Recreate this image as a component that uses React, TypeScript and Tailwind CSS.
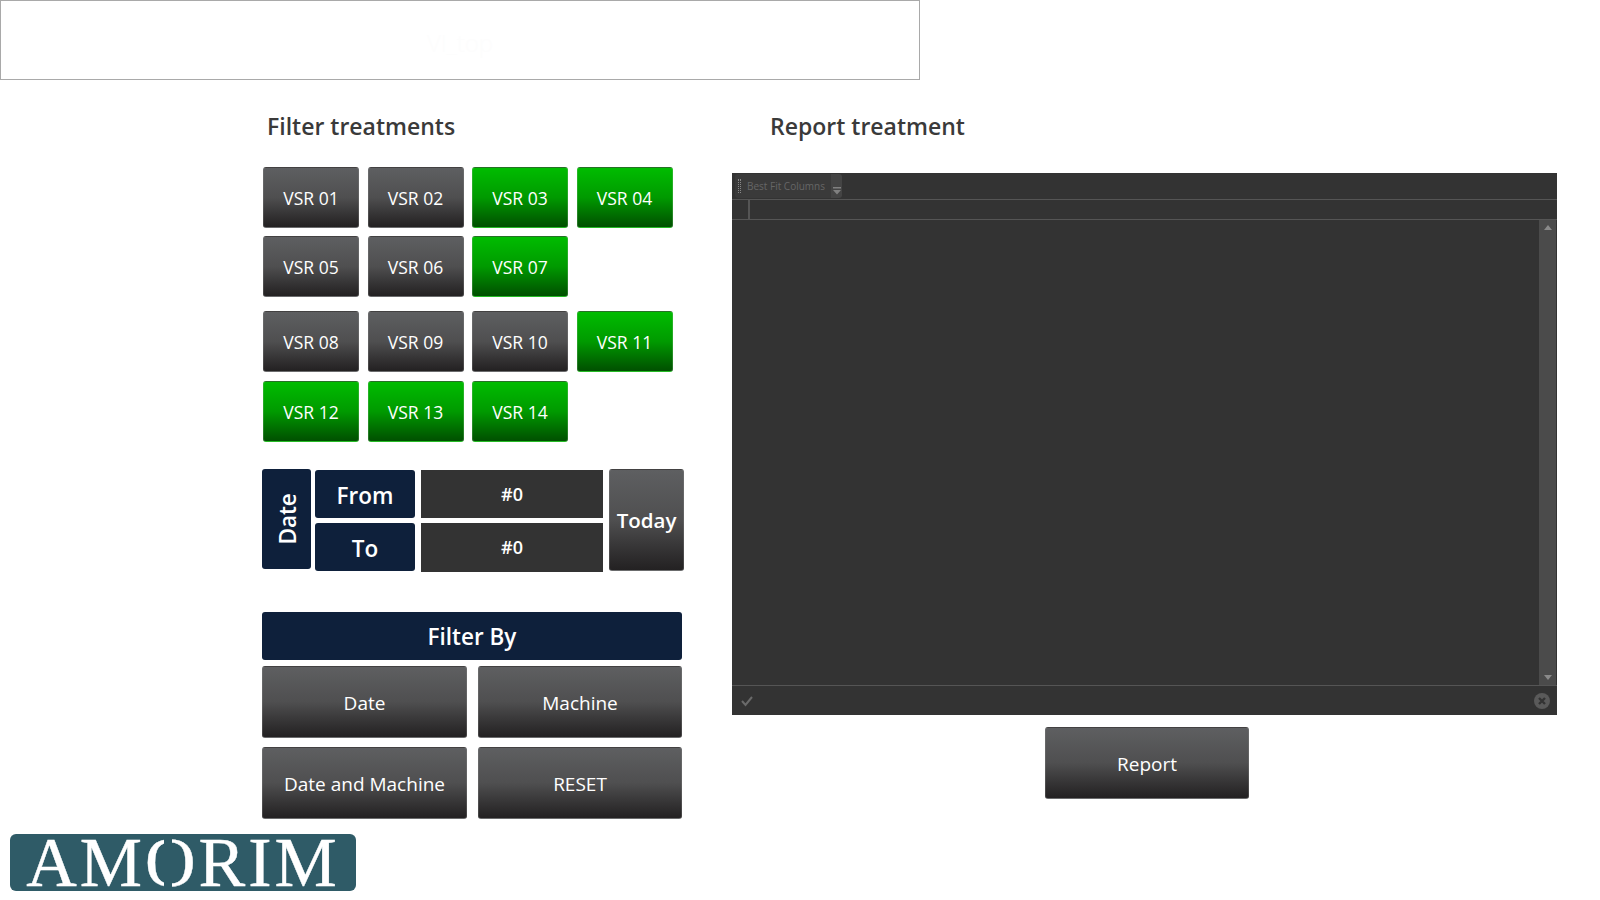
const FONT = "font-['Open_Sans','Noto_Sans',sans-serif]";

const GRAY = "border border-[#8a8a8a]/30 bg-gradient-to-b from-[#5e5f61] via-[#4f4f50] to-[#232122]";
const GREEN = "border border-[#7fb87f]/30 bg-gradient-to-b from-[#00bc00] via-[#009a00] to-[#005000]";

const ROW_A = [
  { label: "VSR 01", on: false },
  { label: "VSR 02", on: false },
  { label: "VSR 03", on: true },
  { label: "VSR 04", on: true },
];
const ROW_B = [
  { label: "VSR 05", on: false },
  { label: "VSR 06", on: false },
  { label: "VSR 07", on: true },
];
const ROW_C = [
  { label: "VSR 08", on: false },
  { label: "VSR 09", on: false },
  { label: "VSR 10", on: false },
  { label: "VSR 11", on: true },
];
const ROW_D = [
  { label: "VSR 12", on: true },
  { label: "VSR 13", on: true },
  { label: "VSR 14", on: true },
];

function VsrRow({ items }: { items: { label: string; on: boolean }[] }) {
  return (
    <div className="flex gap-[8.5px]">
      {items.map((item) => (
        <button
          key={item.label}
          className={`flex h-[61px] w-[96px] items-center justify-center rounded-[3px] pt-[2px] text-[17.5px] text-white ${item.on ? GREEN : GRAY}`}
        >
          {item.label}
        </button>
      ))}
    </div>
  );
}

function BigButton({ label, className = "w-[204px]" }: { label: string; className?: string }) {
  return (
    <button className={`flex h-[72px] items-center justify-center rounded-[3px] pt-[2px] text-[19px] text-white ${GRAY} ${className}`}>
      {label}
    </button>
  );
}

function Logo() {
  return (
    <div className="flex h-[57px] w-[346px] items-center justify-center rounded-[6px] bg-[#2f5b67]">
      <span className="font-['Liberation_Serif',serif] text-[70px] leading-[57px] tracking-[3px] text-white [-webkit-text-stroke:0.4px_white]">
        AM
        <span className="relative inline-block">
          O
          {/* O in the logo is broken at top and bottom */}
          <span className="absolute left-[19px] top-[5px] h-[6px] w-[8px] bg-[#2f5b67]" />
          <span className="absolute bottom-[3px] left-[19px] h-[6px] w-[8px] bg-[#2f5b67]" />
        </span>
        RIM
      </span>
    </div>
  );
}

export default function App() {
  return (
    <div className={`flex h-[900px] w-[1600px] flex-col overflow-hidden bg-white ${FONT}`}>
      <div className="flex h-[80px] w-[920px] shrink-0 items-center justify-center border border-[#a9a9a9] pt-[6px] text-[24px] font-light text-[#fdfdfd]">
        VI_top
      </div>

      <div className="flex h-[754px] shrink-0">
        {/* Left column */}
        <div className="ml-[262px] w-[470px] shrink-0">
          <h2 className="ml-[5px] mt-[30px] h-[57px] text-[23px] leading-[32px] font-semibold text-[#3a3a3a]">
            Filter treatments
          </h2>
          <div className="ml-[1px] flex flex-col gap-[8px]">
            <VsrRow items={ROW_A} />
            <VsrRow items={ROW_B} />
          </div>
          <div className="ml-[1px] mt-[14px] flex flex-col gap-[9px]">
            <VsrRow items={ROW_C} />
            <VsrRow items={ROW_D} />
          </div>

          <div className="mt-[27px] flex">
            <div className="flex h-[100px] w-[49px] items-center justify-center rounded-[3px] bg-[#0e203b] pl-[3px]">
              <span className="-rotate-90 text-[22.5px] font-semibold text-white">Date</span>
            </div>
            <div className="ml-[4px] mt-[1px] flex w-[100px] flex-col gap-[5px]">
              <div className="flex h-[48px] items-center justify-center rounded-[3px] bg-[#0e203b] pt-[3px] text-[22.5px] font-semibold text-white">
                From
              </div>
              <div className="flex h-[48px] items-center justify-center rounded-[3px] bg-[#0e203b] pt-[3px] text-[22.5px] font-semibold text-white">
                To
              </div>
            </div>
            <div className="ml-[6px] mt-[1px] flex w-[182px] flex-col gap-[5px]">
              <div className="flex h-[48px] items-center justify-center bg-[#333333] pt-[1px] text-[18px] font-semibold text-white">#0</div>
              <div className="flex h-[49px] items-center justify-center bg-[#333333] text-[18px] font-semibold text-white">#0</div>
            </div>
            <button className={`ml-[6px] flex h-[102px] w-[75px] items-center justify-center rounded-[3px] text-[20.5px] font-semibold text-white ${GRAY}`}>
              Today
            </button>
          </div>

          <div className="mt-[40px] flex h-[48px] w-[420px] items-center justify-center rounded-[3px] bg-[#0e203b] pt-[2px] text-[22.5px] font-semibold text-white">
            Filter By
          </div>
          <div className="mt-[6px] flex w-[420px] flex-col gap-[9px]">
            <div className="flex justify-between">
              <BigButton label="Date" className="w-[205px]" />
              <BigButton label="Machine" />
            </div>
            <div className="flex justify-between">
              <BigButton label="Date and Machine" className="w-[205px]" />
              <BigButton label="RESET" />
            </div>
          </div>
        </div>

        {/* Right column */}
        <div className="flex w-[825px] shrink-0 flex-col">
          <h2 className="ml-[38px] mt-[30px] h-[63px] text-[23px] leading-[32px] font-semibold text-[#3a3a3a]">
            Report treatment
          </h2>
          <div className="flex h-[542px] flex-col bg-[#333333]">
            <div className="flex h-[27px] shrink-0 border-b border-[#555555] pl-[3px]">
              <div className="mt-[1px] flex h-[24px] w-[96px] items-center rounded-l-[3px] bg-[#3a3a3a]">
                <span className="ml-[3px] h-[14px] w-[3px] border-x border-dotted border-[#888888]" />
                <span className="ml-[6px] whitespace-nowrap text-[10px] text-[#666666]">Best Fit Columns</span>
              </div>
              <div className="mt-[1px] flex h-[24px] w-[11px] items-end justify-center rounded-r-[3px] bg-[#444444] pb-[3px]">
                <svg width="8" height="8" viewBox="0 0 8 8" fill="#808080">
                  <path d="M0 0h8v1.5H0zM0 3h8L4 7.5z" />
                </svg>
              </div>
            </div>
            <div className="h-[20px] shrink-0 border-b border-[#555555]">
              <div className="ml-[16px] h-full w-[2px] bg-[#555555]" />
            </div>
            <div className="flex min-h-0 flex-1 border-b border-[#555555]">
              <div className="flex-1" />
              <div className="mr-[1px] flex w-[17px] flex-col items-center justify-between bg-[#4b4b4b] py-[5px]">
                <svg width="8" height="5" viewBox="0 0 8 5" fill="#8a8a8a">
                  <path d="M4 0L8 5H0z" />
                </svg>
                <svg width="8" height="5" viewBox="0 0 8 5" fill="#8a8a8a">
                  <path d="M0 0h8L4 5z" />
                </svg>
              </div>
            </div>
            <div className="flex h-[29px] shrink-0 items-center justify-between pl-[8px] pr-[7px]">
              <svg width="14" height="14" viewBox="0 0 14 14" fill="none" stroke="#6a6a6a" strokeWidth="2">
                <path d="M2 7l3.5 4L12 3" />
              </svg>
              <svg width="16" height="16" viewBox="0 0 16 16">
                <circle cx="8" cy="8" r="8" fill="#5a5a5a" />
                <path d="M5 5l6 6M11 5l-6 6" stroke="#333333" strokeWidth="2.4" />
              </svg>
            </div>
          </div>
          <div className="ml-[313px] mt-[12px]">
            <BigButton label="Report" />
          </div>
        </div>
      </div>

      <div className="ml-[10px] shrink-0">
        <Logo />
      </div>
    </div>
  );
}
